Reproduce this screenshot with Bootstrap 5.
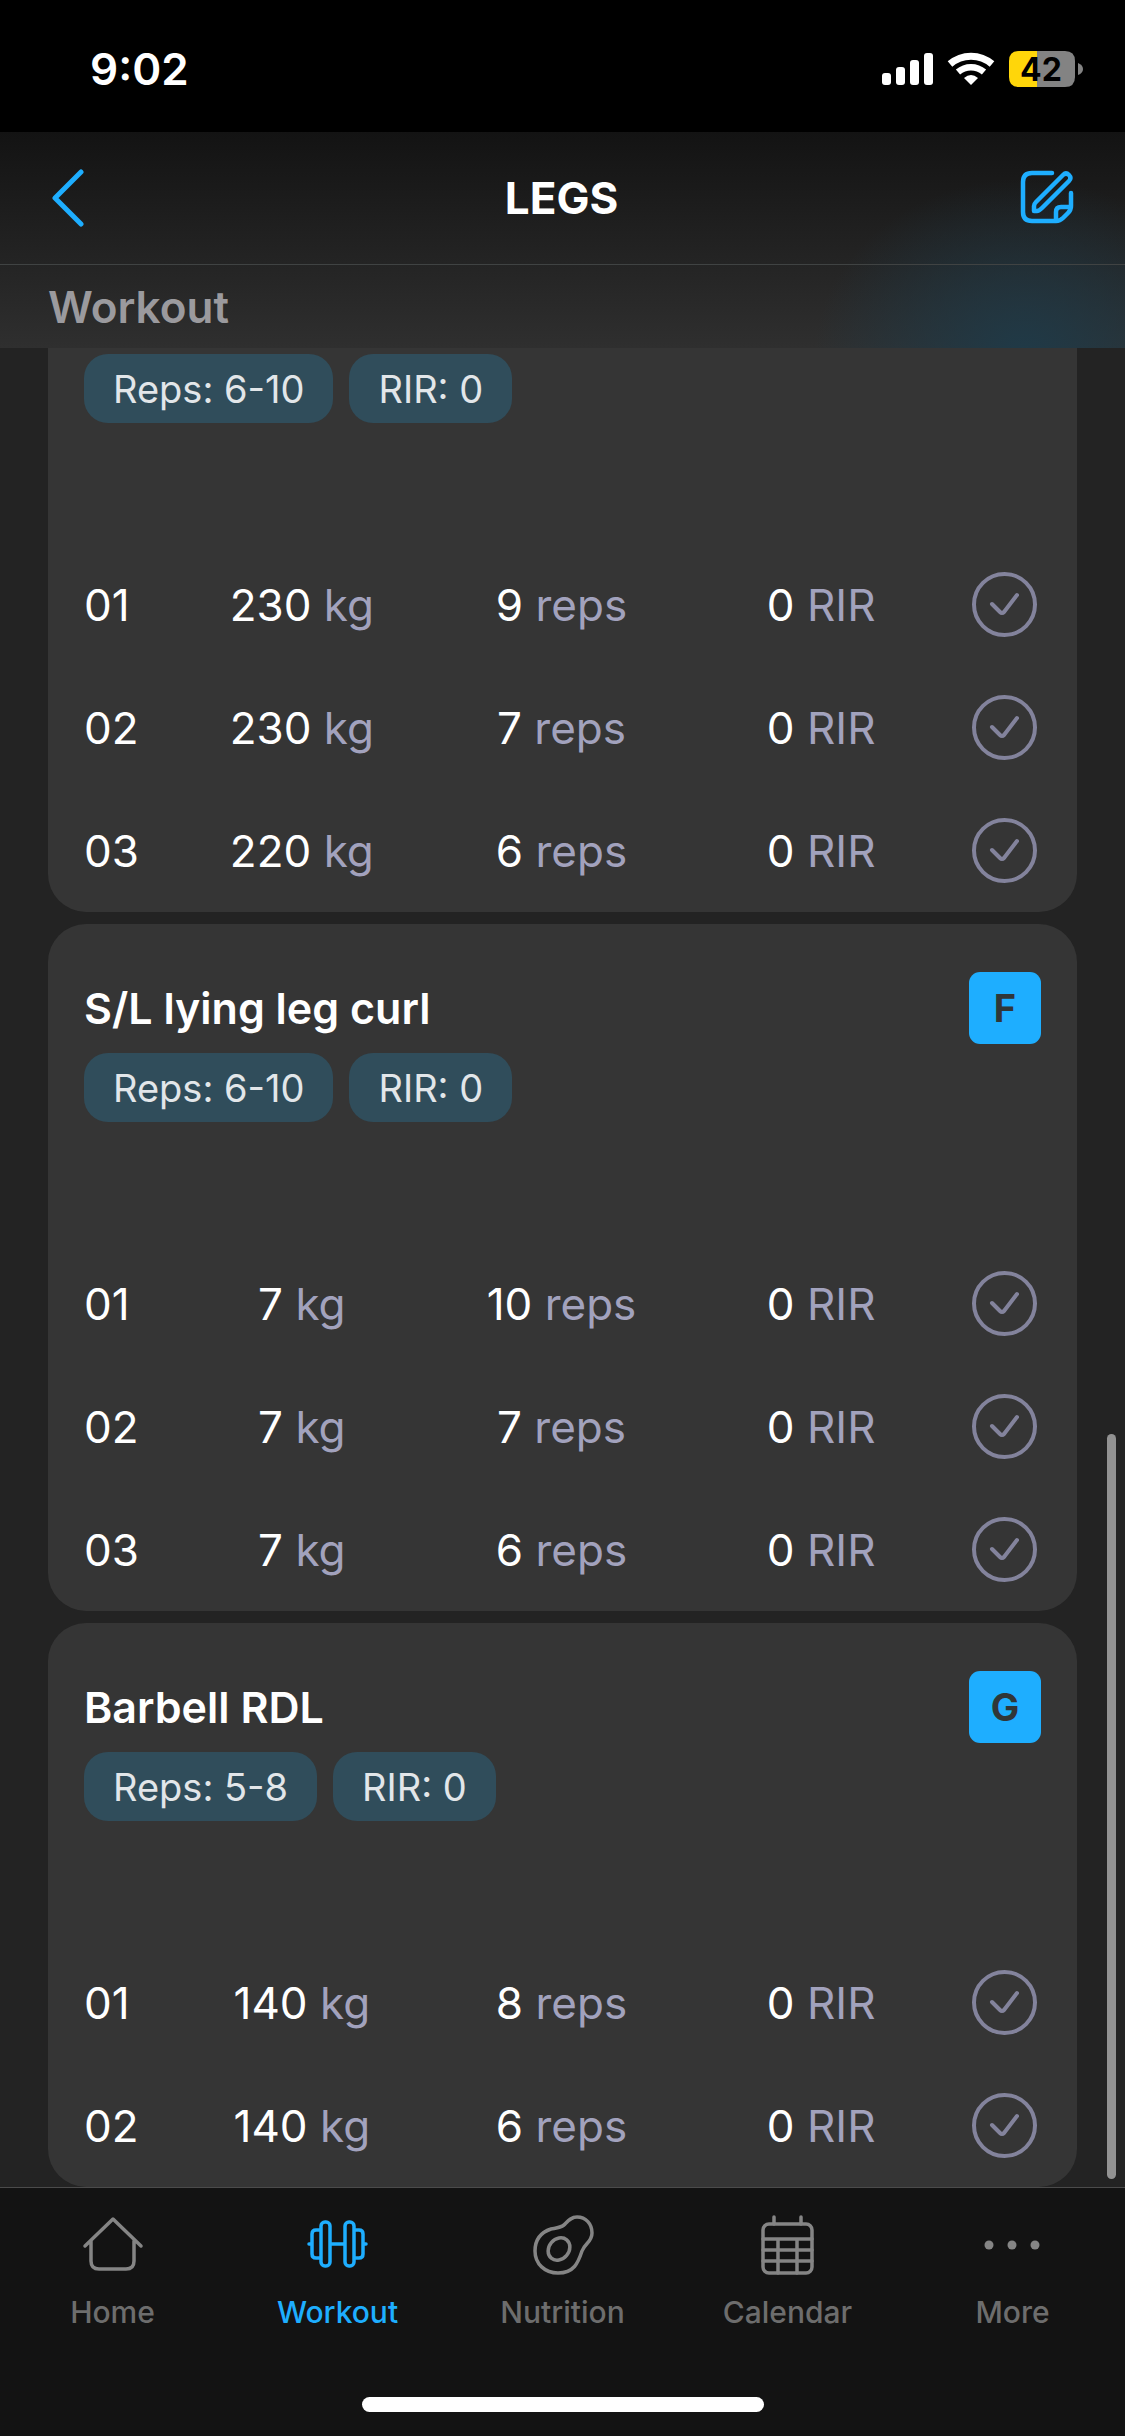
<!DOCTYPE html>
<html lang="en">
<head>
<meta charset="utf-8">
<meta name="viewport" content="width=device-width, initial-scale=1">
<title>Legs workout</title>
<link href="https://cdn.jsdelivr.net/npm/bootstrap@5.3.0/dist/css/bootstrap.min.css" rel="stylesheet">
<style>
  :root { --accent: #1eaeff; --panel: #353535; --muted: #a2a2bd; }
  body { background: #232323; color: #fff; font-family: Inter, "Liberation Sans", sans-serif; font-size: 44px; line-height: 48px; }
  .status { height: 132px; background: #000; padding: 6px 42px 0 90px; }
  .clock { font-size: 44px; font-weight: 600; line-height: 56px; }
  .battery-text { font: 700 32px Inter, "Liberation Sans", sans-serif; }
  .topbar { background: radial-gradient(ellipse 210px 180px at 91% 105%, #1f3a48 0%, rgba(31,58,72,0) 100%), linear-gradient(#131313, #2f2f2f); }
  .titlebar { height: 133px; border-bottom: 1px solid #404343; padding: 0 50px 0 48px; }
  .titlebar h1 { font-size: 44px; font-weight: 700; line-height: 48px; }
  .icon-btn { width: 60px; height: 60px; color: var(--accent); }
  .section-title { height: 83px; padding: 0 48px; color: #9b9a9e; font-weight: 600; }
  .feed { padding: 0 48px; gap: 12px; }
  .exercise { background: var(--panel); border-radius: 38px; padding: 48px 36px 0; }
  .exercise.scrolled { border-radius: 0 0 38px 38px; padding-top: 6px; }
  .exercise h2 { font-size: 43px; font-weight: 600; line-height: 48px; }
  .letter { width: 72px; height: 72px; border-radius: 11px; background: var(--accent); color: #303638; font-size: 38px; font-weight: 700; }
  .chips { gap: 16px; margin: 9px 0 120px; }
  .scrolled .chips { margin-top: 0; }
  .chip { height: 69px; padding: 0 29px; border-radius: 24px; background: #304d5b; color: #e2e6e9; font-size: 38px; }
  .sets { table-layout: fixed; width: 100%; }
  .sets th, .sets td { height: 123px; padding: 0; text-align: center; vertical-align: middle; font-weight: 400; }
  .sets th { width: 88px; text-align: left; }
  .sets .done { width: 90px; text-align: right; padding-right: 4px; }
  .unit { color: var(--muted); }
  .tick.form-check-input { display: block; width: 65px; height: 65px; margin: 0 0 0 auto; border: 4px solid #83839c; border-radius: 50%; background-color: transparent; background-size: 57px 57px;
    background-image: url("data:image/svg+xml,%3Csvg xmlns='http://www.w3.org/2000/svg' viewBox='0 0 57 57' fill='none' stroke='%2383839c' stroke-width='4' stroke-linecap='round' stroke-linejoin='round'%3E%3Cpath d='M16 28 24 36Q26 38 28 36L41 19'/%3E%3C/svg%3E"); }
  .tabs { background: #131313; border-top: 1px solid #4b4b4b; height: 250px; }
  .tab { padding-top: 20px; color: #6d6d6d; font-size: 30px; font-weight: 500; line-height: 36px; text-decoration: none; gap: 14px; }
  .tab svg { color: #858585; }
  .tab.active, .tab.active svg { color: var(--accent); }
  .home-bar { width: 402px; height: 15px; margin-bottom: 25px; border-radius: 8px; background: #fff; }
  .scroll-thumb { right: 9px; top: 1434px; bottom: 258px; width: 9px; border-radius: 5px; background: #929292; }
</style>
</head>
<body>
<div class="d-flex flex-column min-vh-100 position-relative">
  <div class="status d-flex align-items-center justify-content-between">
    <span class="clock">9:02</span>
    <svg width="203" height="48" viewBox="880 45 203 48" role="img" aria-label="Signal, Wi-Fi and battery">
      <g fill="#fff"><rect x="882" y="73" width="9" height="12" rx="3"/><rect x="896" y="67" width="9" height="18" rx="3"/><rect x="910" y="60" width="9" height="25" rx="3"/><rect x="924" y="53" width="9" height="32" rx="3"/></g>
      <g fill="none" stroke="#fff" stroke-width="7"><path d="M950 64A32 32 0 0 1 992 64"/><path d="M958 72A20 20 0 0 1 984 72" stroke-width="6.500"/></g>
      <path d="M964 78Q971 72 978 78L971 85Z" fill="#fff"/>
      <path d="M1037 51h28q10 0 10 10v16q0 10-10 10h-28z" fill="#838383"/><path d="M1037 51v36h-18q-10 0-10-10V61q0-10 10-10z" fill="#ffd60a"/>
      <path d="M1078 63q5 2 5 6t-5 6z" fill="#838383"/>
      <text class="battery-text" x="1041" y="81" text-anchor="middle">42</text>
    </svg>
  </div>
  <header class="topbar">
    <div class="titlebar d-flex align-items-center justify-content-between">
      <button class="icon-btn btn p-0 border-0 d-flex align-items-center" type="button" aria-label="Back">
        <svg width="36" height="58" viewBox="0 0 36 58" fill="none" stroke="currentColor" stroke-width="5" stroke-linecap="round" stroke-linejoin="round"><path d="M33 3 7 29l26 26"/></svg>
      </button>
      <h1 class="m-0">LEGS</h1>
      <button class="icon-btn btn p-0 border-0 d-flex align-items-center justify-content-end" type="button" aria-label="Edit workout">
        <svg width="56" height="56" viewBox="0 0 56 56" fill="none" stroke="currentColor" stroke-width="4.500" stroke-linecap="round" stroke-linejoin="round"><path d="M33 3H13Q4 3 4 12v30q0 9 9 9h24q4 0 7-3l5-5q3-3 3-7V23M37 51v-9q0-5 5-5h10M15 41v-5q0-2 2-4L44 5q3-3 6 0t0 6L23 38q-3 3-5 3z"/></svg>
      </button>
    </div>
    <div class="section-title d-flex align-items-center">Workout</div>
  </header>

  <main class="feed d-flex flex-column flex-grow-1">
    <section class="exercise scrolled">
      <div class="chips d-flex"><span class="chip d-flex align-items-center">Reps: 6-10</span><span class="chip d-flex align-items-center">RIR: 0</span></div>
      <table class="sets"><tbody>
        <tr><th scope="row">01</th><td>230 <span class="unit">kg</span></td><td>9 <span class="unit">reps</span></td><td>0 <span class="unit">RIR</span></td><td class="done"><input class="tick form-check-input" type="checkbox" aria-label="Set 01 done"></td></tr>
        <tr><th scope="row">02</th><td>230 <span class="unit">kg</span></td><td>7 <span class="unit">reps</span></td><td>0 <span class="unit">RIR</span></td><td class="done"><input class="tick form-check-input" type="checkbox" aria-label="Set 02 done"></td></tr>
        <tr><th scope="row">03</th><td>220 <span class="unit">kg</span></td><td>6 <span class="unit">reps</span></td><td>0 <span class="unit">RIR</span></td><td class="done"><input class="tick form-check-input" type="checkbox" aria-label="Set 03 done"></td></tr>
      </tbody></table>
    </section>
    <section class="exercise">
      <div class="d-flex align-items-center justify-content-between"><h2 class="m-0">S/L lying leg curl</h2><span class="letter d-flex align-items-center justify-content-center">F</span></div>
      <div class="chips d-flex"><span class="chip d-flex align-items-center">Reps: 6-10</span><span class="chip d-flex align-items-center">RIR: 0</span></div>
      <table class="sets"><tbody>
        <tr><th scope="row">01</th><td>7 <span class="unit">kg</span></td><td>10 <span class="unit">reps</span></td><td>0 <span class="unit">RIR</span></td><td class="done"><input class="tick form-check-input" type="checkbox" aria-label="Set 01 done"></td></tr>
        <tr><th scope="row">02</th><td>7 <span class="unit">kg</span></td><td>7 <span class="unit">reps</span></td><td>0 <span class="unit">RIR</span></td><td class="done"><input class="tick form-check-input" type="checkbox" aria-label="Set 02 done"></td></tr>
        <tr><th scope="row">03</th><td>7 <span class="unit">kg</span></td><td>6 <span class="unit">reps</span></td><td>0 <span class="unit">RIR</span></td><td class="done"><input class="tick form-check-input" type="checkbox" aria-label="Set 03 done"></td></tr>
      </tbody></table>
    </section>
    <section class="exercise">
      <div class="d-flex align-items-center justify-content-between"><h2 class="m-0">Barbell RDL</h2><span class="letter d-flex align-items-center justify-content-center">G</span></div>
      <div class="chips d-flex"><span class="chip d-flex align-items-center">Reps: 5-8</span><span class="chip d-flex align-items-center">RIR: 0</span></div>
      <table class="sets"><tbody>
        <tr><th scope="row">01</th><td>140 <span class="unit">kg</span></td><td>8 <span class="unit">reps</span></td><td>0 <span class="unit">RIR</span></td><td class="done"><input class="tick form-check-input" type="checkbox" aria-label="Set 01 done"></td></tr>
        <tr><th scope="row">02</th><td>140 <span class="unit">kg</span></td><td>6 <span class="unit">reps</span></td><td>0 <span class="unit">RIR</span></td><td class="done"><input class="tick form-check-input" type="checkbox" aria-label="Set 02 done"></td></tr>
      </tbody></table>
    </section>
  </main>
  <div class="scroll-thumb position-absolute"></div>

  <footer class="tabs d-flex flex-column justify-content-between">
    <nav class="row g-0" aria-label="Main">
      <a class="tab col d-flex flex-column align-items-center" href="#"><svg width="72" height="72" viewBox="0 0 72 72" fill="none" stroke="currentColor" stroke-width="3.500" stroke-linecap="round" stroke-linejoin="round"><path d="M8 38 36 11l28 27M14 33v20q0 8 8 8h27q8 0 8-8V33"/></svg>Home</a>
      <a class="tab active col d-flex flex-column align-items-center" href="#" aria-current="page"><svg width="72" height="72" viewBox="0 0 72 72" fill="none" stroke="currentColor" stroke-width="3.500" stroke-linecap="round"><rect x="19" y="14" width="9" height="44" rx="4"/><rect x="43" y="14" width="9" height="44" rx="4"/><path d="M18 22h-4q-4 0-4 4v20q0 4 4 4h4M53 22h4q4 0 4 4v20q0 4-4 4h-4M29 36h13M7 36h2M62 36h2"/></svg>Workout</a>
      <a class="tab col d-flex flex-column align-items-center" href="#"><svg width="72" height="72" viewBox="0 0 72 72" fill="none" stroke="currentColor" stroke-width="3.500"><path d="M50 9C59 9 65 16 65 25C65 34 58 35 55 43C51 55 47 65 31 65C18 65 8 56 8 43C8 31 15 24 24 21C29 20 33 20 37 17C41 13 44 9 50 9Z"/><ellipse cx="32" cy="41" rx="12" ry="10" transform="rotate(-50 32 41)"/></svg>Nutrition</a>
      <a class="tab col d-flex flex-column align-items-center" href="#"><svg width="72" height="72" viewBox="0 0 72 72" fill="none" stroke="currentColor" stroke-width="3.500" stroke-linecap="round"><rect x="11" y="16" width="49" height="49" rx="6"/><path d="M22 9v7M49 9v7M11 31h49M11 42h49M11 53h49M26 31v34M45 31v34"/></svg>Calendar</a>
      <a class="tab col d-flex flex-column align-items-center" href="#"><svg width="72" height="72" viewBox="0 0 72 72" fill="currentColor"><circle cx="12" cy="37" r="4.500"/><circle cx="35" cy="37" r="4.500"/><circle cx="58" cy="37" r="4.500"/></svg>More</a>
    </nav>
    <div class="home-bar mx-auto"></div>
  </footer>
</div>
<script src="https://cdn.jsdelivr.net/npm/bootstrap@5.3.0/dist/js/bootstrap.bundle.min.js"></script>
</body>
</html>
